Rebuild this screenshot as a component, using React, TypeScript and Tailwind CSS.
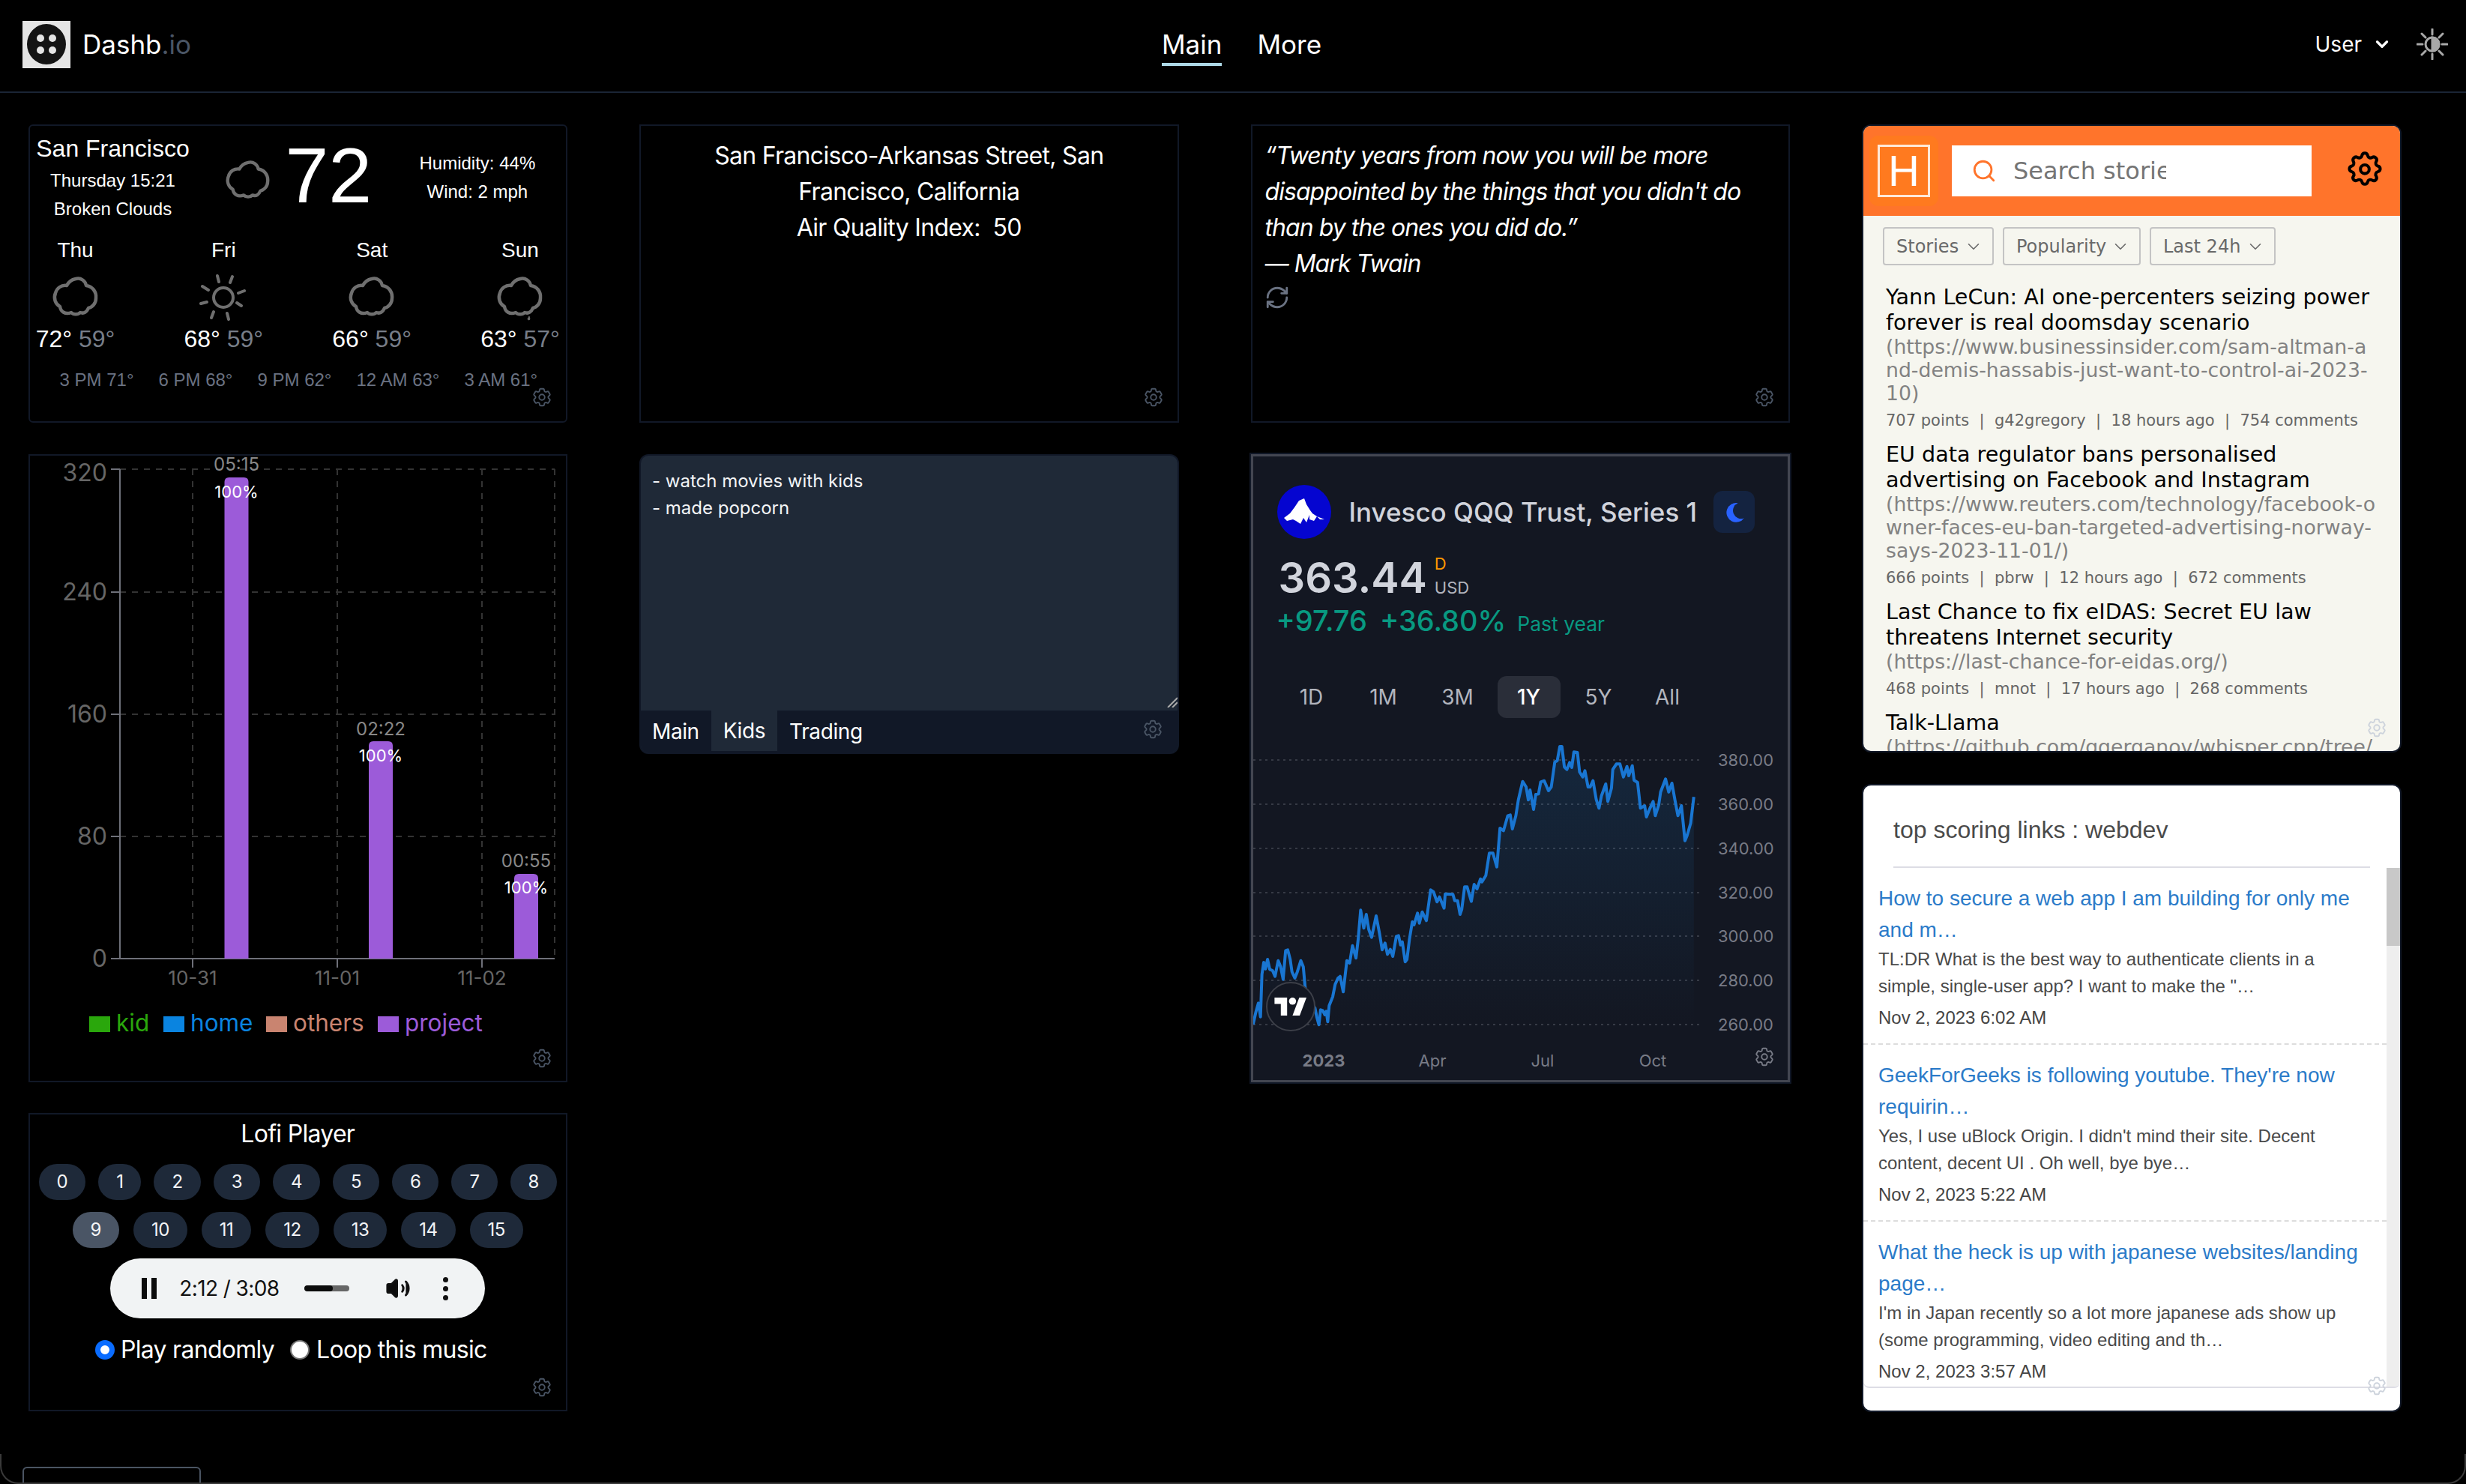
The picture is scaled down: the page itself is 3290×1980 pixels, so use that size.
import React from "react";
import { HiOutlineCog6Tooth } from "react-icons/hi2";
import { ChevronDown, Search, RefreshCw, Volume2 } from "lucide-react";

const Gear = ({ cls = "text-gray-600" }: { cls?: string }) => (
  <HiOutlineCog6Tooth className={`absolute right-[17px] bottom-[17px] w-[30px] h-[30px] ${cls}`} />
);

const Cloud = ({ drop }: { drop?: boolean }) => (
  <svg viewBox="0 0 64 64" className="w-[64px] h-[64px]" fill="none" stroke="#6f6f6f" strokeWidth="4.500" strokeLinejoin="round">
    <path d="M32 7c7-2 13 3 14 9 8 1 14 8 13 17 0 7-5 12-10 13-2 5-6 8-11 6-3 3-9 3-12 0-8 3-14-1-15-8-6-3-9-11-6-18 2-7 8-11 15-10 3-6 7-8 12-9z" transform="translate(0 1)" />
    {drop && <path d="M44 58c-1 2-2 3-2 4s3 1 3 0-1-3-1-4z" fill="#6f6f6f" strokeWidth="1" />}
  </svg>
);

const Sun = () => (
  <svg viewBox="0 0 64 64" className="w-[64px] h-[64px]" fill="none" stroke="#6f6f6f" strokeWidth="4" strokeLinecap="round">
    <circle cx="32" cy="33" r="13" />
    <path d="M24 4l2 8M44 5l-3 8M4 18l8 5M60 24l-8 3M2 41l8-2M56 44l-6-4M16 60l3-8M39 62l-2-8" />
  </svg>
);

const Weather = () => {
  const days = [
    { d: "Thu", hi: "72°", lo: "59°", i: <Cloud /> },
    { d: "Fri", hi: "68°", lo: "59°", i: <Sun /> },
    { d: "Sat", hi: "66°", lo: "59°", i: <Cloud /> },
    { d: "Sun", hi: "63°", lo: "57°", i: <Cloud drop /> },
  ];
  return (
    <div className="relative h-[398px] border-2 border-[#111827] rounded-md font-['Liberation_Sans',Arial,sans-serif] text-white overflow-hidden pl-[8px] pr-[8px]">
      <div className="flex items-start h-[140px]">
        <div className="w-[206px] flex flex-col items-center pt-[10px]">
          <div className="text-[32px] leading-[40px]">San Francisco</div>
          <div className="text-[24px] leading-[38px] mt-[4px]">Thursday 15:21</div>
          <div className="text-[24px] leading-[38px]">Broken Clouds</div>
        </div>
        <div className="ml-[46px] mt-[42px]">
          <svg viewBox="0 0 64 64" className="w-[62px] h-[62px]" fill="none" stroke="#6f6f6f" strokeWidth="4.500" strokeLinejoin="round">
            <path d="M32 7c7-2 13 3 14 9 8 1 14 8 13 17 0 7-5 12-10 13-2 5-6 8-11 6-3 3-9 3-12 0-8 3-14-1-15-8-6-3-9-11-6-18 2-7 8-11 15-10 3-6 7-8 12-9z" />
          </svg>
        </div>
        <div className="ml-[19px] text-[104px] leading-[104px] mt-[14px] w-[179px]">72</div>
        <div className="flex flex-col items-center text-[24px] leading-[38px] mt-[31px] whitespace-nowrap">
          <div>Humidity: 44%</div>
          <div>Wind: 2 mph</div>
        </div>
      </div>
      <div className="flex justify-between pt-[8px]">
        {days.map((x) => (
          <div key={x.d} className="flex flex-col items-center w-[106px]">
            <div className="text-[28px] leading-[36px]">{x.d}</div>
            <div className="h-[72px] flex items-center justify-center mt-[8px]">{x.i}</div>
            <div className="text-[32px] leading-[40px] whitespace-nowrap">
              {x.hi} <span className="text-gray-400/80">{x.lo}</span>
            </div>
          </div>
        ))}
      </div>
      <div className="flex pl-[32px] gap-[33px] text-[24px] leading-[30px] text-gray-500 mt-[20px] whitespace-nowrap">
        {["3 PM 71°", "6 PM 68°", "9 PM 62°", "12 AM 63°", "3 AM 61°"].map((h) => (
          <span key={h}>{h}</span>
        ))}
      </div>
      <Gear />
    </div>
  );
};

const BarChart = () => {
  const ox = -40, oy = -608;
  const ys = [
    [626, "320", 642],
    [790, "240", 801],
    [953, "160", 964],
    [1116, "80", 1127],
    [1279, "0", 1290],
  ] as const;
  const bars = [
    { x: 299.5, top: 637, t: "05:15", ty: 628, py: 664 },
    { x: 492, top: 989, t: "02:22", ty: 981, py: 1016 },
    { x: 686, top: 1166, t: "00:55", ty: 1157, py: 1192 },
  ];
  const legend = [
    [119, 155, "kid", "#2aa70c"],
    [218, 254, "home", "#0a84e0"],
    [355, 391, "others", "#c98470"],
    [504, 540, "project", "#9c5bd9"],
  ] as const;
  return (
    <div className="relative h-[838px] border-2 border-[#111827] font-['Inter',sans-serif] overflow-hidden">
      <svg width="716" height="834" viewBox="0 0 716 834" className="block">
        <g transform={`translate(${ox} ${oy})`} fontFamily="Inter, sans-serif">
          {ys.slice(0, 4).map(([y]) => (
            <line key={y} x1="160" x2="740" y1={y} y2={y} stroke="#333" strokeWidth="2" strokeDasharray="8 8" />
          ))}
          {[257, 450, 643, 740].map((x) => (
            <line key={x} x1={x} x2={x} y1="626" y2="1279" stroke="#333" strokeWidth="2" strokeDasharray="8 8" />
          ))}
          <line x1="160" x2="160" y1="626" y2="1279" stroke="#6e7079" strokeWidth="2" />
          <line x1="148" x2="740" y1="1279" y2="1279" stroke="#6e7079" strokeWidth="2" />
          {ys.map(([y, l, by]) => (
            <g key={l}>
              <line x1="148" x2="160" y1={y} y2={y} stroke="#6e7079" strokeWidth="2" />
              <text x="143" y={by} textAnchor="end" fontSize="32" fill="#666">{l}</text>
            </g>
          ))}
          {[[257, "10-31"], [450, "11-01"], [643, "11-02"]].map(([x, l]) => (
            <g key={l as string}>
              <line x1={x as number} x2={x as number} y1="1279" y2="1291" stroke="#6e7079" strokeWidth="2" />
              <text x={x as number} y="1314" textAnchor="middle" fontSize="26" fill="#666">{l as string}</text>
            </g>
          ))}
          {bars.map((b) => (
            <g key={b.t}>
              <path d={`M${b.x} 1279V${b.top + 6}q0-6 6-6h20q6 0 6 6V1279z`} fill="#9c5bd9" />
              <text x={b.x + 16} y={b.ty} textAnchor="middle" fontSize="24" fill="#888">{b.t}</text>
              <text x={b.x + 16} y={b.py} textAnchor="middle" fontSize="22" fill="#fff">100%</text>
            </g>
          ))}
          {legend.map(([sx, tx, l, c]) => (
            <g key={l}>
              <rect x={sx} y="1356" width="28" height="21" fill={c} />
              <text x={tx} y="1376" fontSize="31.500" fill={c}>{l}</text>
            </g>
          ))}
        </g>
      </svg>
      <HiOutlineCog6Tooth className="absolute right-[17px] bottom-[15px] w-[30px] h-[30px] text-gray-600" />
    </div>
  );
};

const Lofi = () => {
  const r1 = ["0", "1", "2", "3", "4", "5", "6", "7", "8"];
  const r2 = ["9", "10", "11", "12", "13", "14", "15"];
  const pill = (n: string) => (
    <span key={n} className={`h-[48px] px-[24px] flex items-center justify-center rounded-[24px] text-[24px] tracking-[-0.5px] text-gray-100 ${n === "9" ? "bg-gray-600" : "bg-gray-800"}`}>
      {n}
    </span>
  );
  return (
    <div className="relative h-[398px] border-2 border-[#111827] font-['Inter',sans-serif] text-white flex flex-col items-center">
      <div className="text-[32px] leading-[40px] mt-[6px] tracking-[-0.7px]">Lofi Player</div>
      <div className="flex gap-[17px] justify-center mt-[20px]">{r1.map(pill)}</div>
      <div className="flex gap-[19px] justify-center mt-[16px]">{r2.map(pill)}</div>
      <div className="mt-[14px] w-[500px] h-[80px] rounded-full bg-[#f1f3f4] flex items-center text-[#111] pl-[42px]">
        <svg width="20" height="28" viewBox="0 0 20 28" fill="#0c0c0c"><rect width="7" height="28" /><rect x="13" width="7" height="28" /></svg>
        <span className="ml-[30px] text-[28px] tracking-[-0.6px]">2:12 / 3:08</span>
        <span className="ml-[34px] w-[60px] h-[8px] rounded-full bg-[#666] overflow-hidden"><span className="block h-full w-[38px] bg-[#0c0c0c] rounded-full" /></span>
        <Volume2 className="ml-[48px] w-[34px] h-[34px]" fill="#0c0c0c" strokeWidth={2} />
        <span className="ml-[43px] flex flex-col gap-[5px]">
          <i className="block w-[7px] h-[7px] rounded-full bg-[#111]" />
          <i className="block w-[7px] h-[7px] rounded-full bg-[#111]" />
          <i className="block w-[7px] h-[7px] rounded-full bg-[#111]" />
        </span>
      </div>
      <div className="flex items-center mt-[22px] pr-[18px] text-[32px] leading-[40px] tracking-[-0.7px]">
        <span className="w-[26px] h-[26px] rounded-full bg-white border-[7px] border-[#0a6cff]" />
        <span className="ml-[8px]">Play randomly</span>
        <span className="ml-[21px] w-[26px] h-[26px] rounded-full bg-white border-2 border-[#767676]" />
        <span className="ml-[9px]">Loop this music</span>
      </div>
      <HiOutlineCog6Tooth className="absolute right-[17px] bottom-[15px] w-[30px] h-[30px] text-gray-600" />
    </div>
  );
};

const Notes = () => (
  <div className="relative h-[400px] rounded-xl bg-[#1f2937] border-2 border-[#111827] overflow-hidden font-['Inter',sans-serif] text-white flex flex-col">
    <div className="flex-1 relative px-[15px] pt-[16px] text-[24px] leading-[36px] text-gray-100">
      <div>- watch movies with kids</div>
      <div>- made popcorn</div>
      <svg className="absolute right-0 bottom-[4px]" width="14" height="14" viewBox="0 0 14 14" stroke="#aaa" strokeWidth="2"><path d="M1 14L14 1M7 14l7-7" /></svg>
    </div>
    <div className="h-[56px] bg-[#111827] flex text-[28px] items-stretch tracking-[-0.4px]">
      <span className="pl-[15px] pr-[16px] flex items-center">Main</span>
      <span className="px-[16px] flex items-center bg-[#1f2937] mb-[2px]">Kids</span>
      <span className="px-[16px] flex items-center">Trading</span>
    </div>
    <HiOutlineCog6Tooth className="absolute right-[18px] bottom-[16px] w-[30px] h-[30px] text-gray-600" />
  </div>
);

const raw: number[][] = [[25,1160],[33,1110],[40,1075],[46,1130],[50,960],[55,912],[60,938],[66,900],[72,940],[80,945],[87,968],[96,905],[103,930],[110,980],[117,865],[123,862],[130,900],[135,950],[143,975],[150,950],[160,905],[167,930],[172,1010],[178,1060],[190,1070],[200,1095],[205,1130],[211,1162],[216,1102],[222,1105],[228,1122],[232,1108],[236,1150],[240,1085],[250,1050],[257,1000],[265,975],[271,968],[280,1030],[290,905],[298,915],[306,845],[316,895],[322,820],[329,703],[338,775],[345,720],[352,780],[360,812],[373,726],[383,800],[390,862],[398,835],[405,880],[413,860],[420,888],[430,808],[436,805],[442,842],[447,830],[455,910],[460,900],[467,820],[475,750],[480,762],[490,715],[495,755],[503,710],[515,745],[527,622],[535,630],[545,670],[552,650],[565,695],[568,638],[590,640],[595,665],[603,665],[610,720],[615,700],[623,610],[630,610],[642,668],[650,600],[658,618],[668,578],[672,590],[683,565],[693,475],[703,475],[714,530],[723,375],[733,385],[745,325],[752,322],[758,378],[768,325],[775,262],[787,188],[797,210],[803,262],[808,222],[818,300],[824,240],[832,238],[838,190],[848,185],[860,225],[868,210],[878,110],[885,105],[892,48],[898,48],[905,130],[912,140],[920,112],[926,132],[932,70],[942,72],[948,150],[957,170],[963,145],[972,210],[978,210],[986,185],[995,260],[1003,295],[1010,245],[1022,198],[1028,268],[1038,215],[1042,140],[1052,118],[1062,118],[1072,170],[1082,128],[1087,165],[1097,125],[1102,183],[1112,192],[1120,295],[1132,285],[1137,330],[1147,295],[1156,268],[1162,325],[1172,280],[1177,230],[1191,178],[1200,230],[1209,195],[1218,265],[1226,325],[1236,285],[1246,425],[1252,405],[1262,355],[1271,250]];

const ranges: [string, string][] = [
  ["1D", "w-[96px]"],
  ["1M", "w-[96px]"],
  ["3M", "w-[102px]"],
  ["1Y", "w-[84px] ml-[2px] bg-[#2a2e39] text-white font-medium"],
  ["5Y", "w-[102px]"],
  ["All", "w-[82px]"],
];

const Stock = () => {
  const pts = raw.map(([x, y]) => `${(1660 + x / 2.119 - 1672).toFixed(1)},${(980 + y / 3 - 960).toFixed(1)}`).join(" ");
  const lastX = 1660 + 1271 / 2.119 - 1672;
  const firstX = 1660 + 25 / 2.119 - 1672;
  const grid: [number, string][] = [[1014, "380.00"], [1073, "360.00"], [1132, "340.00"], [1191, "320.00"], [1249, "300.00"], [1308, "280.00"], [1367, "260.00"]];
  const lbl: [number, string, string][] = [[1766, "2023", "700"], [1911, "Apr", "400"], [2058, "Jul", "400"], [2205, "Oct", "400"]];
  return (
    <div className="relative h-[838px] bg-[#131722] border-[3px] border-[#434651] outline-2 outline-[#111827] font-['Inter',sans-serif] overflow-hidden">
      <div className="flex items-center pl-[32px] pt-[38px]">
        <span className="w-[72px] h-[72px] rounded-full bg-[#0505d0] flex items-center justify-center shrink-0">
          <svg width="54" height="36" viewBox="0 0 54 36" fill="#fff"><path d="M0 26L8 20L14 12L20 3L27 0L30 8L35 16L38 20L44 24L54 28L48 28L44 24L40 30L34 28L34 22L30 32L26 26L22 34L16 30L12 28L4 30Z" /></svg>
        </span>
        <span className="ml-[24px] text-[35px] font-medium text-[#d1d4dc] whitespace-nowrap">Invesco QQQ Trust, Series 1</span>
        <span className="ml-[22px] w-[55px] h-[56px] rounded-xl bg-[#142340] flex items-center justify-center shrink-0">
          <svg width="28" height="28" viewBox="0 0 24 24" fill="#2962ff"><path d="M16 2a11 11 0 1 0 7 17 9 9 0 0 1-7-17z" /></svg>
        </span>
      </div>
      <div className="flex items-start pl-[34px] mt-[18px] text-[#d1d4dc]">
        <span className="text-[56px] leading-[68px] font-semibold">363.44</span>
        <span className="ml-[10px] flex flex-col text-[22px] leading-[26px] pt-[2px]">
          <span className="text-[#ff9800]">D</span>
          <span className="text-[#b2b5be] mt-[6px]">USD</span>
        </span>
      </div>
      <div className="flex items-baseline pl-[31px] text-[#089981] whitespace-nowrap">
        <span className="text-[38px] leading-[46px] font-medium">+97.76</span>
        <span className="ml-[17px] text-[38px] leading-[46px] font-medium">+36.80%</span>
        <span className="ml-[15px] text-[26.500px]">Past year</span>
      </div>
      <div className="flex items-center pl-[30px] mt-[49px] text-[28px] text-[#b2b5be]">
        {ranges.map(([r, c]) => (
          <span key={r} className={`h-[56px] flex items-center justify-center rounded-xl ${c}`}>{r}</span>
        ))}
      </div>
      <svg width="714" height="480" viewBox="0 0 714 480" className="absolute left-0 top-[351px]">
        <defs>
          <linearGradient id="area" x1="0" y1="0" x2="0" y2="1">
            <stop offset="0" stopColor="#2196f3" stopOpacity="0.13" />
            <stop offset="1" stopColor="#2196f3" stopOpacity="0" />
          </linearGradient>
        </defs>
        {grid.map(([y, l]) => (
          <g key={l}>
            <line x1="0" x2="600" y1={y - 960} y2={y - 960} stroke="#363a45" strokeWidth="2" strokeDasharray="3 5" />
            <text x="620" y={y - 952} fontSize="22" fill="#787b86" fontFamily="Inter, sans-serif">{l}</text>
          </g>
        ))}
        <polygon points={`${firstX},407 ${pts} ${lastX},407`} fill="url(#area)" />
        <polyline points={pts} fill="none" stroke="#1976d2" strokeWidth="4" strokeLinejoin="round" />
        {lbl.map(([x, l, w]) => (
          <text key={l} x={x - 1672} y="463" textAnchor="middle" fontSize="22" fontWeight={w} fill="#787b86" fontFamily="Inter, sans-serif">{l}</text>
        ))}
      </svg>
      <span className="absolute left-[17px] top-[701px] w-[66px] h-[66px] rounded-full bg-[#131722] border-2 border-[#3c3f48] flex items-center justify-center">
        <svg width="44" height="24" viewBox="0 0 36 20" fill="#fff"><path d="M14 20H7V7H0V0h14v20zM28 20h-8L27.500 0h8L28 20z" /><circle cx="20" cy="4" r="4" /></svg>
      </span>
      <HiOutlineCog6Tooth className="absolute right-[16px] bottom-[16px] w-[30px] h-[30px] text-[#787b86]" />
    </div>
  );
};

const hn = [
  { t: "Yann LeCun: AI one-percenters seizing power forever is real doomsday scenario", u: "(https://www.businessinsider.com/sam-altman-and-demis-hassabis-just-want-to-control-ai-2023-10)", m: "707 points  |  g42gregory  |  18 hours ago  |  754 comments" },
  { t: "EU data regulator bans personalised advertising on Facebook and Instagram", u: "(https://www.reuters.com/technology/facebook-owner-faces-eu-ban-targeted-advertising-norway-says-2023-11-01/)", m: "666 points  |  pbrw  |  12 hours ago  |  672 comments" },
  { t: "Last Chance to fix eIDAS: Secret EU law threatens Internet security", u: "(https://last-chance-for-eidas.org/)", m: "468 points  |  mnot  |  17 hours ago  |  268 comments" },
  { t: "Talk-Llama", u: "(https://github.com/ggerganov/whisper.cpp/tree/master/examples/talk-llama)", m: "" },
];

const HN = () => (
  <div className="relative h-[838px] rounded-xl bg-[#f6f6ef] overflow-hidden font-['DejaVu_Sans',Verdana,sans-serif] border-2 border-[#111827]">
    <div className="h-[120px] bg-[#ff742b] flex items-center relative">
      <span className="ml-[8px] w-[92px] h-[94px] rounded-xl bg-[#ff7a1f] flex items-center justify-center">
        <span className="w-[70px] h-[70px] border-[3px] border-[#ffe9d8] flex items-center justify-center text-white text-[58px] font-['Liberation_Sans',sans-serif] leading-none">H</span>
      </span>
      <div className="ml-[18px] w-[480px] h-[68px] bg-white flex items-center pl-[26px]">
        <Search className="w-[34px] h-[34px] text-[#ff742b]" strokeWidth={2} />
        <span className="ml-[22px] w-[204px] overflow-hidden whitespace-nowrap text-[32px] text-[#757575]">Search stories by title, url or author</span>
      </div>
      <svg className="ml-[44px]" width="54" height="54" viewBox="0 0 24 24" fill="none" stroke="#000" strokeWidth="1.800" strokeLinejoin="round">
        <path d="M10.300 2.900c.4-1.900 3-1.900 3.400 0a1.700 1.700 0 0 0 2.600 1.100c1.700-1 3.500 1 2.400 2.600a1.700 1.700 0 0 0 1 2.500c1.900.4 1.900 3 0 3.400a1.700 1.700 0 0 0-1 2.600c1 1.700-.7 3.500-2.400 2.400a1.700 1.700 0 0 0-2.600 1c-.4 1.900-3 1.900-3.400 0a1.700 1.700 0 0 0-2.600-1c-1.700 1-3.500-.7-2.400-2.400a1.700 1.700 0 0 0-1-2.600c-1.900-.4-1.900-3 0-3.400a1.700 1.700 0 0 0 1-2.500c-1-1.700.7-3.500 2.400-2.600a1.700 1.700 0 0 0 2.600-1.100z" />
        <circle cx="12" cy="11" r="2.600" />
      </svg>
    </div>
    <div className="flex gap-[12px] pl-[26px] mt-[15px] text-[24px] text-[#696969]">
      {[["Stories", "w-[148px]"], ["Popularity", "w-[184px]"], ["Last 24h", "w-[168px]"]].map(([l, w]) => (
        <span key={l} className={`${w} h-[51px] border-2 border-[#c4c4c4] rounded-[4px] flex items-center justify-between pl-[16px] pr-[12px]`}>
          {l}
          <ChevronDown className="w-[26px] h-[26px]" strokeWidth={1.5} />
        </span>
      ))}
    </div>
    <div className="pl-[30px] pr-[28px] pt-[25px]">
      {hn.map((i) => (
        <div key={i.t} className="mb-[12px]">
          <div className="text-[28.600px] leading-[34px] text-black">{i.t}</div>
          <div className="text-[26.700px] leading-[31px] text-[#828282] break-all">{i.u}</div>
          {i.m && <div className="text-[21px] leading-[32px] mt-[5px] text-[#666] whitespace-pre">{i.m}</div>}
        </div>
      ))}
    </div>
    <HiOutlineCog6Tooth className="absolute right-[16px] bottom-[16px] w-[30px] h-[30px] text-[#cdd3dc]" />
  </div>
);

const rd = [
  { t: "How to secure a web app I am building for only me and m…", b: "TL:DR What is the best way to authenticate clients in a simple, single-user app? I want to make the \"…", d: "Nov 2, 2023 6:02 AM" },
  { t: "GeekForGeeks is following youtube. They're now requirin…", b: "Yes, I use uBlock Origin. I didn't mind their site. Decent content, decent UI . Oh well, bye bye…", d: "Nov 2, 2023 5:22 AM" },
  { t: "What the heck is up with japanese websites/landing page…", b: "I'm in Japan recently so a lot more japanese ads show up (some programming, video editing and th…", d: "Nov 2, 2023 3:57 AM" },
];

const Reddit = () => (
  <div className="relative h-[838px] rounded-xl bg-white overflow-hidden font-['Liberation_Sans',Arial,sans-serif] border-2 border-[#111827]">
    <div className="mx-[40px] h-[110px] flex items-center border-b-2 border-[#dddde5] text-[32px] text-[#4a4a4a] pt-[10px]">top scoring links : webdev</div>
    <div className="h-[694px] flex border-b-2 border-[#dddde5] rounded-b-lg overflow-hidden">
      <div className="flex-1 overflow-hidden">
        {rd.map((r, i) => (
          <div key={r.d} className={`h-[236px] pl-[20px] pr-[22px] pt-[20px] ${i < 2 ? "border-b-2 border-dashed border-[#ddd]" : ""}`}>
            <div className="text-[28px] leading-[42px] text-[#2b7bc9]">{r.t}</div>
            <div className="text-[24px] leading-[36px] text-[#4a4a4a]">{r.b}</div>
            <div className="text-[24px] leading-[36px] text-[#444] mt-[6px]">{r.d}</div>
          </div>
        ))}
      </div>
      <div className="w-[18px] bg-[#eee] shrink-0"><div className="h-[104px] bg-[#c8c8c8]" /></div>
    </div>
    <HiOutlineCog6Tooth className="absolute right-[16px] bottom-[18px] w-[30px] h-[30px] text-[#cdd3dc]" />
  </div>
);

export default function App() {
  return (
    <div className="relative w-[3290px] h-[1980px] bg-black overflow-hidden font-['Inter',sans-serif] text-white">
      <header className="h-[124px] border-b-2 border-[#1a2535] flex items-center relative pb-[4px]">
        <div className="ml-[30px] w-[64px] h-[63px] bg-[#e5e5e5] flex items-center justify-center">
          <svg width="54" height="56" viewBox="0 0 54 56">
            <ellipse cx="27" cy="28" rx="26" ry="27" fill="#141414" />
            <circle cx="19" cy="20" r="5" fill="#e5e5e5" />
            <circle cx="35" cy="20" r="5" fill="#e5e5e5" />
            <circle cx="19" cy="36" r="5" fill="#e5e5e5" />
            <circle cx="35" cy="36" r="5" fill="#e5e5e5" />
          </svg>
        </div>
        <div className="ml-[16px] text-[35px]">Dashb<span className="text-gray-600">.io</span></div>
        <nav className="absolute left-[1550px] top-[34px] flex gap-[47px] text-[35px] leading-[50px]">
          <span className="border-b-4 border-[#add8e6]">Main</span>
          <span>More</span>
        </nav>
        <div className="ml-auto flex items-center mr-[24px]">
          <span className="text-[28px]">User</span>
          <ChevronDown className="ml-[14px] w-[26px] h-[26px]" strokeWidth={3} />
          <svg className="ml-[33px]" width="42" height="42" viewBox="0 0 42 42" stroke="#a8a8a8" strokeWidth="3" strokeLinecap="round">
            <circle cx="21" cy="21" r="9" fill="none" />
            <path d="M21 12a9 9 0 0 1 0 18z" fill="#a8a8a8" />
            <path d="M21 1v7M21 34v7M1 21h7M34 21h7M7 7l5 5M30 30l5 5M7 35l5-5M30 12l5-5" />
          </svg>
        </div>
      </header>
      <main className="flex gap-[96px] pl-[37.500px] pt-[42px]">
        <div className="w-[719.500px] flex flex-col gap-[41px]">
          <Weather />
          <div className="mt-[1px]"><BarChart /></div>
          <Lofi />
        </div>
        <div className="w-[719.500px] flex flex-col gap-[42px]">
          <div className="relative h-[398px] border-2 border-[#111827] text-center text-[32px] leading-[48px] tracking-[-0.7px] pt-[16px] px-[60px]">
            <div>San Francisco-Arkansas Street, San Francisco, California</div>
            <div className="whitespace-pre">Air Quality Index:  50</div>
            <Gear />
          </div>
          <Notes />
        </div>
        <div className="w-[719.500px] flex flex-col gap-[42px]">
          <div className="relative h-[398px] border-2 border-[#111827] text-[32px] leading-[48px] tracking-[-0.95px] pt-[16px] px-[17px] italic">
            <div>“Twenty years from now you will be more disappointed by the things that you didn't do than by the ones you did do.”</div>
            <div>— Mark Twain</div>
            <RefreshCw className="w-[34px] h-[34px] text-gray-500 mt-[4px] -ml-[1px]" strokeWidth={2} />
            <Gear />
          </div>
          <Stock />
        </div>
        <div className="w-[719.500px] flex flex-col gap-[42px]">
          <HN />
          <Reddit />
        </div>
      </main>
      <div className="absolute left-[30px] top-[1957px] w-[238px] h-[40px] border-2 border-[#4b5563] rounded-t-md text-center text-[28px] leading-[34px] pt-[15px] text-gray-200">Add Widget</div>
      <div className="absolute left-0 right-0 bottom-0 h-[40px] rounded-b-[24px] border-b-2 border-x-2 border-[#3a3a3a] pointer-events-none" />
    </div>
  );
}
